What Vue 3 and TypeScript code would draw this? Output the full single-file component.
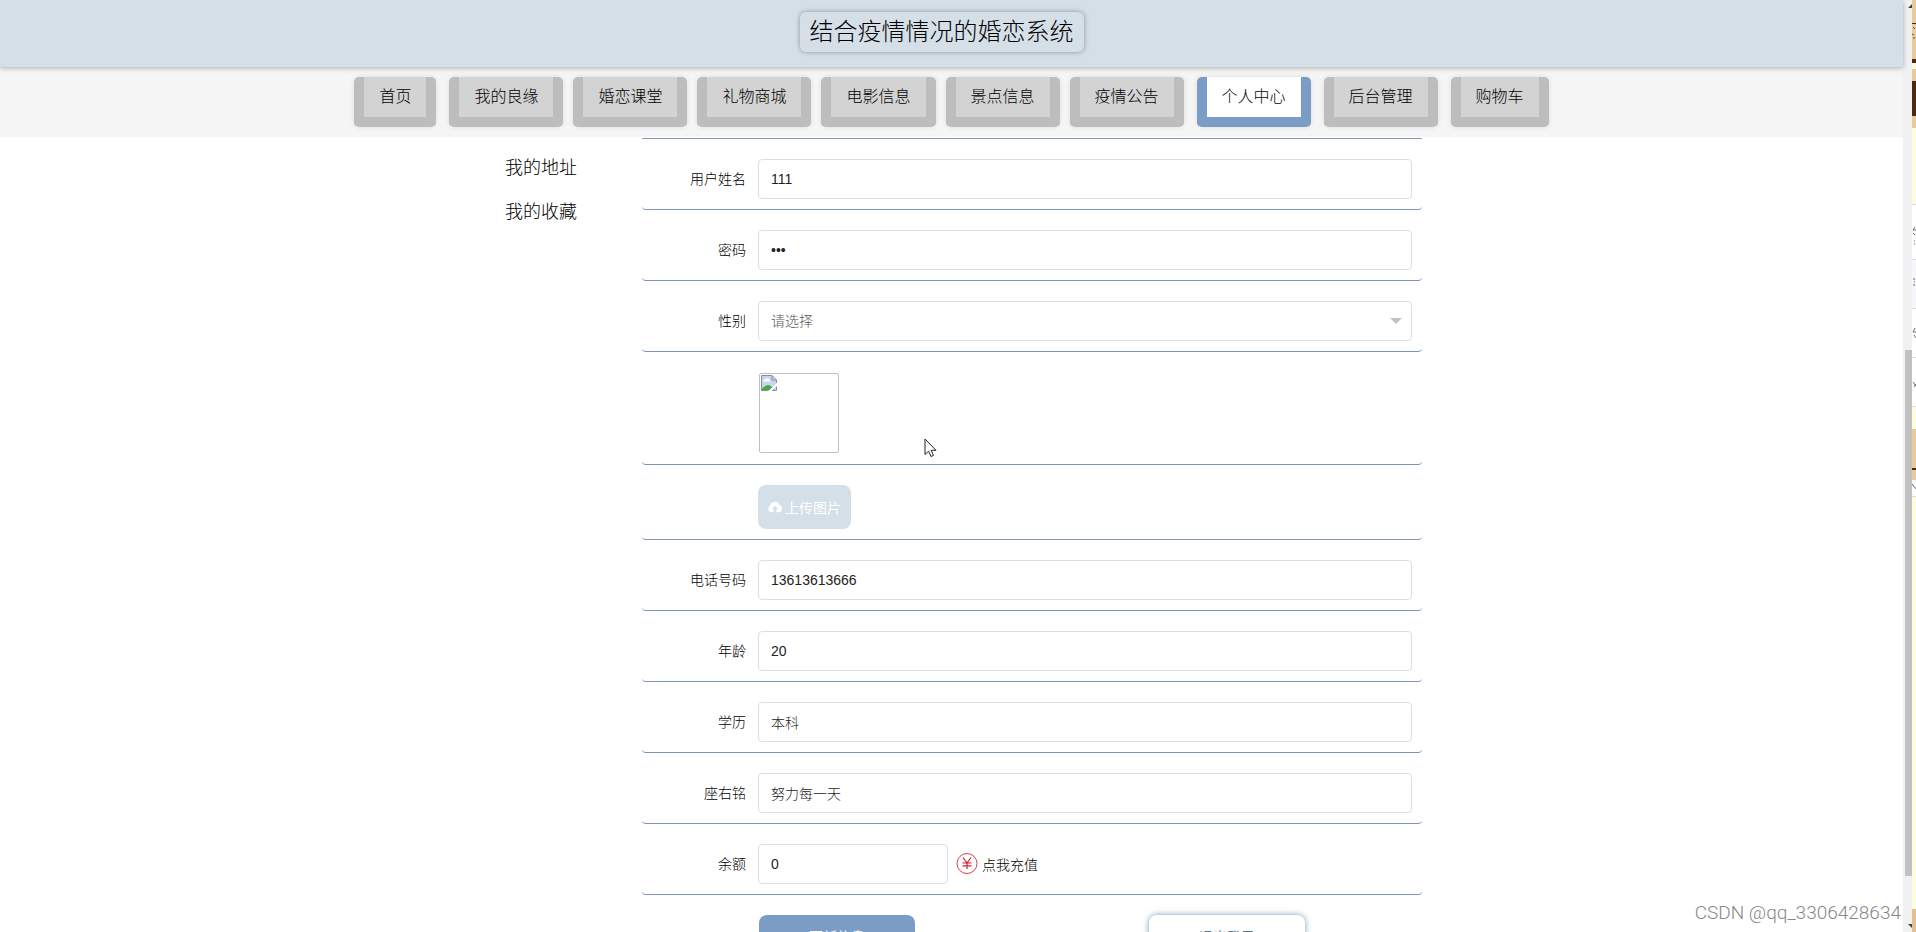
<script setup lang="ts">
import { ref } from 'vue'

interface NavItem {
  label: string
  active?: boolean
}

interface Field {
  id: string
  label: string
  type: string
  value: string
}

const navGroups: NavItem[][] = [
  [{ label: '首页' }],
  [
    { label: '我的良缘' },
    { label: '婚恋课堂' },
    { label: '礼物商城' },
    { label: '电影信息' },
    { label: '景点信息' },
    { label: '疫情公告' },
  ],
  [{ label: '个人中心', active: true }],
  [{ label: '后台管理' }],
  [{ label: '购物车' }],
]

const sideLinks: string[] = ['我的地址', '我的收藏']

const account = ref<Field[]>([
  { id: 'username', label: '用户姓名', type: 'text', value: '111' },
  { id: 'password', label: '密码', type: 'password', value: '111' },
])

const profile = ref<Field[]>([
  { id: 'phone', label: '电话号码', type: 'text', value: '13613613666' },
  { id: 'age', label: '年龄', type: 'text', value: '20' },
  { id: 'education', label: '学历', type: 'text', value: '本科' },
  { id: 'motto', label: '座右铭', type: 'text', value: '努力每一天' },
])

const gender = ref('')
const balance = ref('0')
</script>

<template>
  <div class="screen">
    <div class="page">
      <header class="header">
        <h1 class="title">结合疫情情况的婚恋系统</h1>
      </header>

      <nav class="nav">
        <ul v-for="(group, g) in navGroups" :key="g" class="nav-group">
          <li v-for="item in group" :key="item.label">
            <a href="#" class="nav-link" :class="{ active: item.active }">{{ item.label }}</a>
          </li>
        </ul>
      </nav>

      <main class="main">
        <aside class="side">
          <a v-for="link in sideLinks" :key="link" href="#" class="side-link">{{ link }}</a>
        </aside>

        <form class="form" @submit.prevent>
          <div class="row row-edge"></div>

          <div v-for="f in account" :key="f.id" class="row">
            <label class="label" :for="f.id">{{ f.label }}</label>
            <input :id="f.id" v-model="f.value" class="input" :type="f.type" />
          </div>

          <div class="row">
            <label class="label" for="gender">性别</label>
            <div class="select-wrap">
              <select id="gender" v-model="gender" class="input select">
                <option value="">请选择</option>
                <option value="男">男</option>
                <option value="女">女</option>
              </select>
              <svg class="caret" width="12" height="6" viewBox="0 0 12 6" aria-hidden="true">
                <path d="M0 0H12L6 6Z" fill="#c2c2c2" />
              </svg>
            </div>
          </div>

          <div class="row">
            <span class="label"></span>
            <div class="avatar">
              <svg width="16" height="16" viewBox="0 0 16 16" aria-hidden="true">
                <path d="M.5 .5H11L15.500 5V15.500H.5Z" fill="#c6d5f3" />
                <path d="M2 6.500Q2 4.500 4 4.500Q5 2.500 7 3.500Q9 3.500 9 6.500Z" fill="#fff" />
                <path d="M1 15V14Q4 10 8 10Q11 11 13 15Z" fill="#4ba83f" />
                <path d="M16 8L7.500 16H10.500L16 11Z" fill="#fff" />
                <path d="M7.500 15.500H.5V.5H11L15.500 5V8M11 .5V5H15.500M11 15.500H15.500V11.500" fill="none" stroke="#8b8f94" />
              </svg>
            </div>
          </div>

          <div class="row">
            <span class="label"></span>
            <button type="button" class="upload">
              <svg width="14" height="12" viewBox="0 0 14 12" aria-hidden="true">
                <path
                  d="M3.400 11.300A3.300 3.300 0 0 1 2 5.100A4.900 4.900 0 0 1 11.500 4.100A3.700 3.700 0 0 1 10.800 11.300H8.300V8.300H10.200L7 4.700L3.800 8.300H5.700V11.300Z"
                  fill="#fff"
                />
              </svg>
              上传图片
            </button>
          </div>

          <div v-for="f in profile" :key="f.id" class="row">
            <label class="label" :for="f.id">{{ f.label }}</label>
            <input :id="f.id" v-model="f.value" class="input" :type="f.type" />
          </div>

          <div class="row">
            <label class="label" for="balance">余额</label>
            <input id="balance" v-model="balance" class="input short" type="text" />
            <a href="#" class="recharge">
              <svg width="22" height="22" viewBox="0 0 22 22" aria-hidden="true">
                <circle cx="11" cy="10.500" r="10" fill="none" stroke="#d9434e" />
                <path d="M7 4.500L11 10L15 4.500M11 10V16M6.500 10H15.500M6.500 12.800H15.500" fill="none" stroke="#d0202e" stroke-width="1.200" />
              </svg>
              <span>点我充值</span>
            </a>
          </div>

          <div class="actions">
            <button type="submit" class="action primary">更新信息</button>
            <button type="button" class="action">退出登录</button>
          </div>
        </form>
      </main>

      <svg class="cursor" width="13" height="20" viewBox="0 0 13 20" aria-hidden="true">
        <path d="M1 1V16.500L4.500 13.200L7 18.500L9.500 17.400L7.200 12.300H12Z" fill="#fff" stroke="#222" />
      </svg>
      <div class="watermark">CSDN @qq_3306428634</div>
    </div>

    <div class="scrollbar" aria-hidden="true">
      <svg class="arrow" width="4" height="4" viewBox="0 0 4 4"><path d="M4 0V4H0Z" fill="#404040" /></svg>
      <div class="track">
        <div class="thumb"></div>
      </div>
      <svg class="arrow" width="4" height="4" viewBox="0 0 4 4"><path d="M0 0H4V4Z" fill="#404040" /></svg>
    </div>

    <svg class="edge" width="4" height="932" viewBox="0 0 4 932" aria-hidden="true">
      <rect width="4" height="932" fill="#fdfcdd" />
      <rect width="4" height="59" fill="#e8cc9c" />
      <rect y="23" width="4" height="1" fill="#4a2a10" />
      <path d="M1 27L3 29M0 34L2 35M2 37V39" stroke="#6a4a2a" />
      <rect y="59" width="4" height="4" fill="#4a2a10" />
      <rect y="69" width="4" height="59" fill="#e8cc9c" />
      <rect y="81" width="4" height="35" fill="#4a2a10" />
      <rect y="205" width="4" height="202" fill="#fff" />
      <rect y="260" width="4" height="48" fill="#f5f7fa" />
      <path d="M0 204.500H4M0 259.500H4M0 308.500H4M0 357.500H4M0 406.500H4M0 496.500H4" stroke="#dddde2" />
      <path
        d="M3 227L1 230H4M1 233L3 235M2 241H3M2 244H3M1 279H3M2 282H3M1 285H3M3 328L1 332H4M2 335L4 338M1 382L4 386M2 387L4 384"
        fill="none"
        stroke="#666a74"
      />
      <rect y="429" width="4" height="51" fill="#e8cc9c" />
      <rect y="468" width="4" height="2" fill="#4a2a10" />
      <rect y="480" width="4" height="16" fill="#fff" />
      <path d="M0 484L4 489" stroke="#666b4a" />
      <rect y="909" width="4" height="23" fill="#e3bf92" />
    </svg>
  </div>
</template>

<style>
body {
  overflow: hidden;
}
</style>

<style scoped>
* {
  box-sizing: border-box;
}

.screen {
  display: flex;
  height: 100vh;
  overflow: hidden;
  background: #fff;
  color: #000;
  font-family: 'Liberation Sans', 'Noto Sans CJK SC', sans-serif;
  font-weight: 300;
}

.page {
  position: relative;
  display: flex;
  flex: 1;
  flex-direction: column;
  min-width: 0;
}

.header {
  position: relative;
  z-index: 1;
  display: flex;
  flex-shrink: 0;
  align-items: flex-start;
  justify-content: center;
  height: 67px;
  padding: 12px 20px 0 0;
  background: #d5dfe8;
  box-shadow: 0 1px 5px rgba(0, 0, 0, 0.3);
}

.title {
  margin: 0;
  padding: 0 10px;
  border-radius: 6px;
  box-shadow: 0 0 5px rgba(70, 75, 85, 0.5);
  font-size: 24px;
  font-weight: 300;
  line-height: 40px;
}

.nav {
  display: flex;
  flex-shrink: 0;
  gap: 13px;
  justify-content: center;
  padding: 10px 0;
  background: #f5f5f5;
}

.nav-group {
  display: flex;
  gap: 10px;
  margin: 0;
  padding: 0;
  list-style: none;
}

.nav-link {
  display: block;
  padding: 0 15px;
  border: solid #bdbdbd;
  border-width: 0 10px 10px;
  border-radius: 5px;
  background: #d3d3d3;
  box-shadow: 0 0 5px rgba(0, 0, 0, 0.1);
  color: #000;
  font-size: 16px;
  line-height: 40px;
  text-decoration: none;
  white-space: nowrap;
}

.nav-link.active {
  border-color: #7b9dc5;
  background: #fff;
}

.main {
  display: flex;
  flex: 1;
  gap: 41px;
  justify-content: center;
  min-height: 0;
  overflow: hidden;
}

.side {
  display: flex;
  flex: 0 0 120px;
  flex-direction: column;
  align-items: center;
  padding-top: 9px;
}

.side-link {
  color: #000;
  font-size: 18px;
  line-height: 44px;
  text-decoration: none;
}

.form {
  flex: 0 1 780px;
  font-size: 14px;
}

.row {
  display: flex;
  align-items: center;
  padding: 20px 10px 10px 0;
  border-bottom: 1px solid #8097af;
  border-radius: 4px;
}

.row-edge {
  height: 2px;
  padding: 0;
}

.label {
  flex: 0 0 116px;
  padding-right: 12px;
  color: #000;
  line-height: 20px;
  text-align: right;
}

.input {
  flex: 1;
  min-width: 0;
  width: 100%;
  height: 40px;
  padding: 0 12px;
  border: 1px solid #dcdfe0;
  border-radius: 4px;
  background: #fff;
  color: #222;
  font: inherit;
}

.short {
  flex: 0 0 190px;
}

.select-wrap {
  position: relative;
  display: flex;
  flex: 1;
}

.select {
  color: #555;
  appearance: none;
}

.caret {
  position: absolute;
  top: 17px;
  right: 10px;
  pointer-events: none;
}

.avatar {
  width: 80px;
  height: 80px;
  margin: 1px;
  padding: 1px;
  border: 1px solid #c0c0c0;
  border-radius: 2px;
}

.upload {
  display: flex;
  gap: 3px;
  align-items: center;
  height: 44px;
  padding: 0 10px;
  border: 0;
  border-radius: 8px;
  background: #d5dfe8;
  color: #fff;
  font: inherit;
  font-weight: 400;
}

.recharge {
  display: flex;
  gap: 4px;
  align-items: center;
  margin-left: 8px;
  color: #000;
  text-decoration: none;
}

.actions {
  display: flex;
  gap: 234px;
  padding: 20px 0 0 117px;
}

.action {
  flex: 0 1 156px;
  height: 42px;
  padding: 0;
  border: 0;
  border-radius: 8px;
  background: #fff;
  box-shadow: 0 0 6px rgba(70, 110, 160, 0.7);
  color: #5d7486;
  font: inherit;
  font-weight: 400;
}

.primary {
  background: #7b9dc5;
  box-shadow: none;
  color: #fff;
}

.cursor {
  position: absolute;
  top: 438px;
  left: 924px;
}

.watermark {
  position: absolute;
  right: 2px;
  bottom: 8px;
  color: #888;
  font-family: Roboto, 'Liberation Sans', sans-serif;
  font-size: 19px;
  line-height: 22px;
}

.scrollbar {
  display: flex;
  flex: 0 0 9px;
  flex-direction: column;
  align-items: flex-end;
  padding: 4px 0;
  background: #f1f1f1;
}

.arrow {
  flex-shrink: 0;
}

.track {
  display: grid;
  flex: 1;
  grid-template-rows: 342fr 526fr 48fr;
}

.thumb {
  grid-row: 2;
  width: 7px;
  background: #c1c1c1;
}

.edge {
  flex-shrink: 0;
}
</style>
